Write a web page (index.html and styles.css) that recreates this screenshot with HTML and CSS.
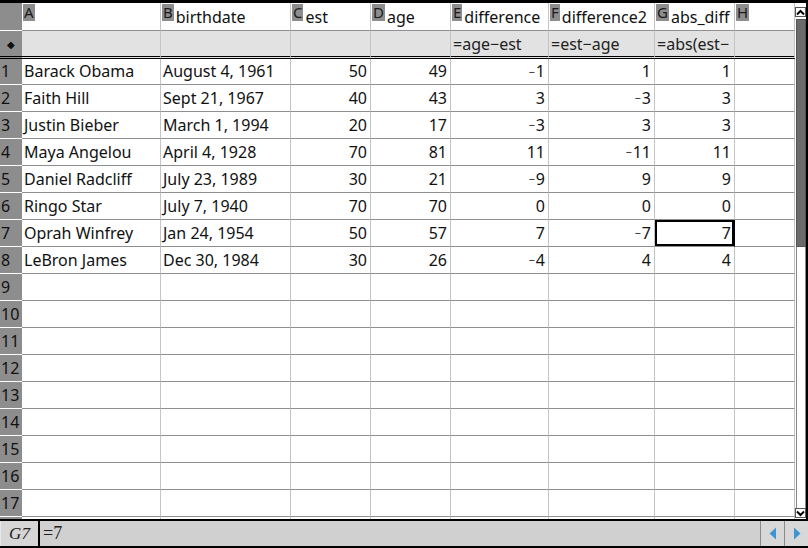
FILE: index.html
```html
<!DOCTYPE html>
<html>
<head>
<meta charset="utf-8">
<link rel="stylesheet" href="styles.css">
</head>
<body>
<div class="app">
  <div class="topbar"></div>
  <div class="main">
    <div class="sheet">
      <div class="row hdr">
        <div class="rh"></div>
        <div class="c"><span class="tag">A</span></div>
        <div class="c"><span class="tag">B</span><span class="name">birthdate</span></div>
        <div class="c"><span class="tag">C</span><span class="name">est</span></div>
        <div class="c"><span class="tag">D</span><span class="name">age</span></div>
        <div class="c"><span class="tag">E</span><span class="name">difference</span></div>
        <div class="c"><span class="tag">F</span><span class="name">difference2</span></div>
        <div class="c"><span class="tag">G</span><span class="name">abs_diff</span></div>
        <div class="c"><span class="tag">H</span></div>
      </div>
      <div class="row fx">
        <div class="rh"><span class="dia">◆</span></div>
        <div class="c"></div>
        <div class="c"></div>
        <div class="c"></div>
        <div class="c"></div>
        <div class="c">=age−est</div>
        <div class="c">=est−age</div>
        <div class="c">=abs(est−</div>
        <div class="c"></div>
      </div>
      <div class="row data first">
        <div class="rh">1</div>
        <div class="c">Barack Obama</div><div class="c">August 4, 1961</div>
        <div class="c num">50</div><div class="c num">49</div>
        <div class="c num"><span class="neg">−</span>1</div><div class="c num">1</div><div class="c num">1</div><div class="c"></div>
      </div>
      <div class="row data">
        <div class="rh">2</div>
        <div class="c">Faith Hill</div><div class="c">Sept 21, 1967</div>
        <div class="c num">40</div><div class="c num">43</div>
        <div class="c num">3</div><div class="c num"><span class="neg">−</span>3</div><div class="c num">3</div><div class="c"></div>
      </div>
      <div class="row data">
        <div class="rh">3</div>
        <div class="c">Justin Bieber</div><div class="c">March 1, 1994</div>
        <div class="c num">20</div><div class="c num">17</div>
        <div class="c num"><span class="neg">−</span>3</div><div class="c num">3</div><div class="c num">3</div><div class="c"></div>
      </div>
      <div class="row data">
        <div class="rh">4</div>
        <div class="c">Maya Angelou</div><div class="c">April 4, 1928</div>
        <div class="c num">70</div><div class="c num">81</div>
        <div class="c num">11</div><div class="c num"><span class="neg">−</span>11</div><div class="c num">11</div><div class="c"></div>
      </div>
      <div class="row data">
        <div class="rh">5</div>
        <div class="c">Daniel Radcliff</div><div class="c">July 23, 1989</div>
        <div class="c num">30</div><div class="c num">21</div>
        <div class="c num"><span class="neg">−</span>9</div><div class="c num">9</div><div class="c num">9</div><div class="c"></div>
      </div>
      <div class="row data">
        <div class="rh">6</div>
        <div class="c">Ringo Star</div><div class="c">July 7, 1940</div>
        <div class="c num">70</div><div class="c num">70</div>
        <div class="c num">0</div><div class="c num">0</div><div class="c num">0</div><div class="c"></div>
      </div>
      <div class="row data">
        <div class="rh">7</div>
        <div class="c">Oprah Winfrey</div><div class="c">Jan 24, 1954</div>
        <div class="c num">50</div><div class="c num">57</div>
        <div class="c num">7</div><div class="c num"><span class="neg">−</span>7</div><div class="c num sel">7</div><div class="c"></div>
      </div>
      <div class="row data">
        <div class="rh">8</div>
        <div class="c">LeBron James</div><div class="c">Dec 30, 1984</div>
        <div class="c num">30</div><div class="c num">26</div>
        <div class="c num"><span class="neg">−</span>4</div><div class="c num">4</div><div class="c num">4</div><div class="c"></div>
      </div>
      <div class="row data"><div class="rh">9</div><div class="c"></div><div class="c"></div><div class="c"></div><div class="c"></div><div class="c"></div><div class="c"></div><div class="c"></div><div class="c"></div></div>
      <div class="row data"><div class="rh">10</div><div class="c"></div><div class="c"></div><div class="c"></div><div class="c"></div><div class="c"></div><div class="c"></div><div class="c"></div><div class="c"></div></div>
      <div class="row data"><div class="rh">11</div><div class="c"></div><div class="c"></div><div class="c"></div><div class="c"></div><div class="c"></div><div class="c"></div><div class="c"></div><div class="c"></div></div>
      <div class="row data"><div class="rh">12</div><div class="c"></div><div class="c"></div><div class="c"></div><div class="c"></div><div class="c"></div><div class="c"></div><div class="c"></div><div class="c"></div></div>
      <div class="row data"><div class="rh">13</div><div class="c"></div><div class="c"></div><div class="c"></div><div class="c"></div><div class="c"></div><div class="c"></div><div class="c"></div><div class="c"></div></div>
      <div class="row data"><div class="rh">14</div><div class="c"></div><div class="c"></div><div class="c"></div><div class="c"></div><div class="c"></div><div class="c"></div><div class="c"></div><div class="c"></div></div>
      <div class="row data"><div class="rh">15</div><div class="c"></div><div class="c"></div><div class="c"></div><div class="c"></div><div class="c"></div><div class="c"></div><div class="c"></div><div class="c"></div></div>
      <div class="row data"><div class="rh">16</div><div class="c"></div><div class="c"></div><div class="c"></div><div class="c"></div><div class="c"></div><div class="c"></div><div class="c"></div><div class="c"></div></div>
      <div class="row data"><div class="rh">17</div><div class="c"></div><div class="c"></div><div class="c"></div><div class="c"></div><div class="c"></div><div class="c"></div><div class="c"></div><div class="c"></div></div>
      <div class="row data"><div class="rh"></div><div class="c"></div><div class="c"></div><div class="c"></div><div class="c"></div><div class="c"></div><div class="c"></div><div class="c"></div><div class="c"></div></div>
    </div>
    <div class="vscroll">
      <div class="sbtn up"><svg width="9" height="7" viewBox="0 0 9 7"><path d="M1 5.5 L4.5 2 L8 5.5" fill="none" stroke="#000" stroke-width="2"/></svg></div>
      <div class="thumb"></div>
      <div class="track"></div>
      <div class="sbtn down"><svg width="9" height="7" viewBox="0 0 9 7"><path d="M1 1.5 L4.5 5 L8 1.5" fill="none" stroke="#000" stroke-width="2"/></svg></div>
    </div>
  </div>
  <div class="status">
    <div class="cellref">G7</div>
    <div class="formula">=7</div>
    <div class="nav">
      <div class="navbtn"><svg width="8" height="13" viewBox="0 0 8 13"><path d="M7 0.5 L0.5 6.5 L7 12.5 Z" fill="#3b96d2"/></svg></div>
      <div class="navbtn"><svg width="8" height="13" viewBox="0 0 8 13"><path d="M1 0.5 L7.5 6.5 L1 12.5 Z" fill="#3b96d2"/></svg></div>
    </div>
  </div>
</div>
</body>
</html>
```

FILE: styles.css
```css
html, body {
  margin: 0;
  padding: 0;
  background: #fff;
}

.app {
  width: 808px;
  height: 548px;
  display: flex;
  flex-direction: column;
  overflow: hidden;
  font-family: "Noto Sans", "Open Sans", sans-serif;
  font-size: 16px;
  color: #111;
}

.topbar {
  height: 3px;
  background: #000;
  flex: none;
}

.main {
  height: 516px;
  display: flex;
  flex: none;
  overflow: hidden;
}

.sheet {
  width: 795px;
  flex: none;
  overflow: hidden;
}

.row {
  display: grid;
  grid-template-columns: 22px 139px 130px 80px 80px 98px 106px 80px 60px;
  height: 27px;
}

.c {
  box-sizing: border-box;
  border-right: 1px solid #c4c4c4;
  border-bottom: 1px solid #8f8f8f;
  overflow: hidden;
  white-space: nowrap;
  display: flex;
  align-items: center;
  padding: 0 2px;
  line-height: 19px;
}

.rh {
  box-sizing: border-box;
  background: #8d8d8d;
  border-bottom: 1px solid #fff;
  display: flex;
  align-items: center;
  padding-left: 1px;
  color: #111;
  white-space: nowrap;
  overflow: visible;
  line-height: 19px;
}

.num {
  justify-content: flex-end;
  padding-right: 3px;
}

.neg {
  font-size: 11px;
  vertical-align: 5px;
  line-height: 10px;
  margin-right: 1px;
}

/* header row */
.hdr {
  height: 28px;
}
.hdr .c {
  align-items: flex-start;
  padding: 0 1px;
  background: #fff;
  overflow: visible;
}
.tag {
  margin-top: 1px;
  height: 17px;
  line-height: 17px;
  background: #8d8d8d;
  color: #1a1a1a;
  font-size: 15px;
  padding: 0 1px;
  flex: none;
  overflow: visible;
}
.name {
  margin-top: 5px;
  margin-left: 2px;
}

/* formula row */
.fx {
  height: 28px;
}
.fx .c {
  background: #e2e2e2;
  border-bottom: 3px double #000;
  color: #222;
  padding-top: 1px;
}
.fx .rh {
  border-bottom: 3px double #000;
  justify-content: center;
  padding-left: 0;
}
.dia {
  font-size: 10px;
  line-height: 10px;
}

.first {
  height: 26px;
}

.sel {
  box-shadow: inset 0 0 0 2px #000;
  border-right-color: #000;
}

/* vertical scrollbar */
.vscroll {
  width: 13px;
  flex: none;
  box-sizing: border-box;
  border-right: 2px solid #000;
  display: flex;
  flex-direction: column;
  align-items: stretch;
  padding-top: 4px;
  background: #fff;
}
.sbtn {
  height: 10px;
  box-sizing: border-box;
  border: 1px solid #555;
  background: #fff;
  display: flex;
  align-items: center;
  justify-content: center;
  flex: none;
}
.sbtn svg {
  display: block;
}
.thumb {
  height: 226px;
  margin: 2px 0 0 1px;
  background: #6b6b6b;
  border: 1px solid #555;
  flex: none;
}
.track {
  flex: 1;
  border-left: 1px solid #888;
  border-right: 1px solid #888;
  margin-left: 1px;
}
.down {
  margin-bottom: 1px;
}

/* status bar */
.status {
  height: 29px;
  box-sizing: border-box;
  border-top: 2px solid #000;
  border-bottom: 2px solid #000;
  background: #d0d0d0;
  display: flex;
  align-items: stretch;
  flex: none;
}
.cellref {
  width: 40px;
  box-sizing: border-box;
  border-right: 2px solid #000;
  border-left: 1px solid #e8e8e8;
  background: #d6d6d6;
  font-family: "Liberation Serif", "Times New Roman", serif;
  font-style: italic;
  font-size: 17px;
  display: flex;
  align-items: center;
  justify-content: center;
  color: #222;
}
.formula {
  flex: 1;
  font-family: "Liberation Serif", "Times New Roman", serif;
  font-size: 18px;
  display: flex;
  align-items: center;
  padding-left: 3px;
  color: #222;
}
.nav {
  display: flex;
  width: 48px;
  flex: none;
}
.navbtn {
  flex: 1;
  box-sizing: border-box;
  border-left: 1px solid #8a8a8a;
  background: #d8d8d8;
  display: flex;
  align-items: center;
  justify-content: center;
}
.navbtn svg {
  display: block;
}
```
